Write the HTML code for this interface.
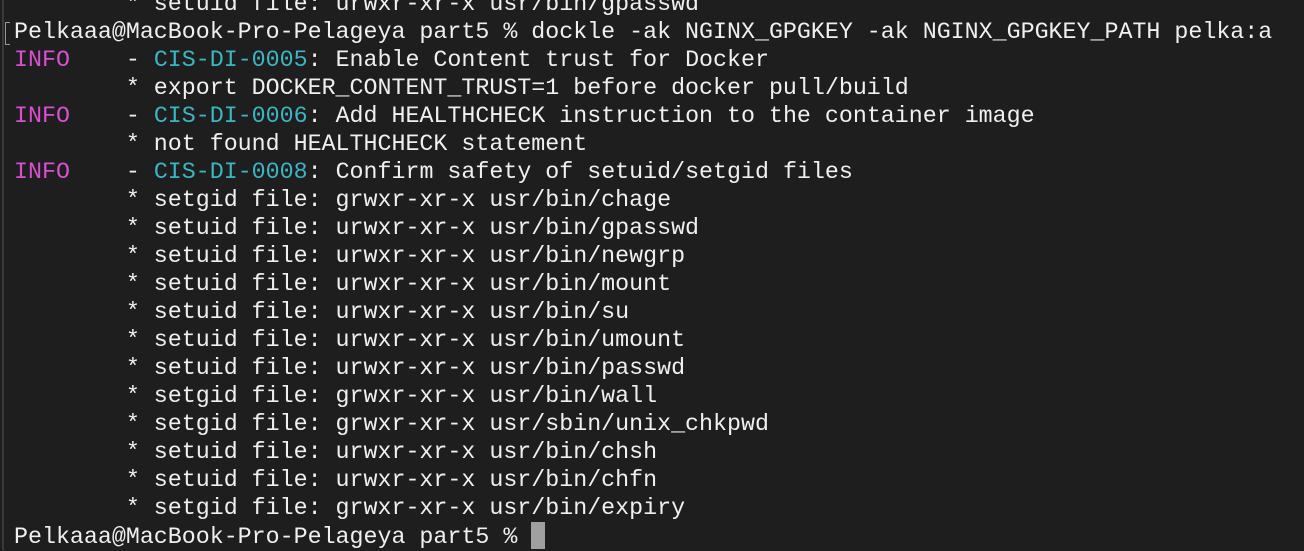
<!DOCTYPE html>
<html><head><meta charset="utf-8"><style>
html,body{margin:0;padding:0;background:#1e1e1e;width:1304px;height:550px;overflow:hidden}
.t{position:absolute;left:14px;top:-10px;font-family:"Liberation Mono",monospace;font-size:23.3px;line-height:28px;color:#f0f0f0;white-space:pre}
.m{color:#d94fd0}.c{color:#3bb6c4}
.b{position:absolute;left:2px;top:0;width:2px;height:550px;background:#3a3a3a}
.br{position:absolute;left:5px;top:22px;width:4px;height:21px;border:1px solid #999;border-right:none}
.cur{display:inline-block;width:14px;height:27px;background:#a0a0a0;vertical-align:-6px}
</style></head><body>
<div class="b"></div>
<div class="br"></div>
<div class="t">        * setuid file: urwxr-xr-x usr/bin/gpasswd
Pelkaaa@MacBook-Pro-Pelageya part5 % dockle -ak NGINX_GPGKEY -ak NGINX_GPGKEY_PATH pelka:a
<span class="m">INFO</span>    - <span class="c">CIS-DI-0005</span>: Enable Content trust for Docker
        * export DOCKER_CONTENT_TRUST=1 before docker pull/build
<span class="m">INFO</span>    - <span class="c">CIS-DI-0006</span>: Add HEALTHCHECK instruction to the container image
        * not found HEALTHCHECK statement
<span class="m">INFO</span>    - <span class="c">CIS-DI-0008</span>: Confirm safety of setuid/setgid files
        * setgid file: grwxr-xr-x usr/bin/chage
        * setuid file: urwxr-xr-x usr/bin/gpasswd
        * setuid file: urwxr-xr-x usr/bin/newgrp
        * setuid file: urwxr-xr-x usr/bin/mount
        * setuid file: urwxr-xr-x usr/bin/su
        * setuid file: urwxr-xr-x usr/bin/umount
        * setuid file: urwxr-xr-x usr/bin/passwd
        * setgid file: grwxr-xr-x usr/bin/wall
        * setgid file: grwxr-xr-x usr/sbin/unix_chkpwd
        * setuid file: urwxr-xr-x usr/bin/chsh
        * setuid file: urwxr-xr-x usr/bin/chfn
        * setgid file: grwxr-xr-x usr/bin/expiry
Pelkaaa@MacBook-Pro-Pelageya part5 % <span class="cur"></span></div>
</body></html>
